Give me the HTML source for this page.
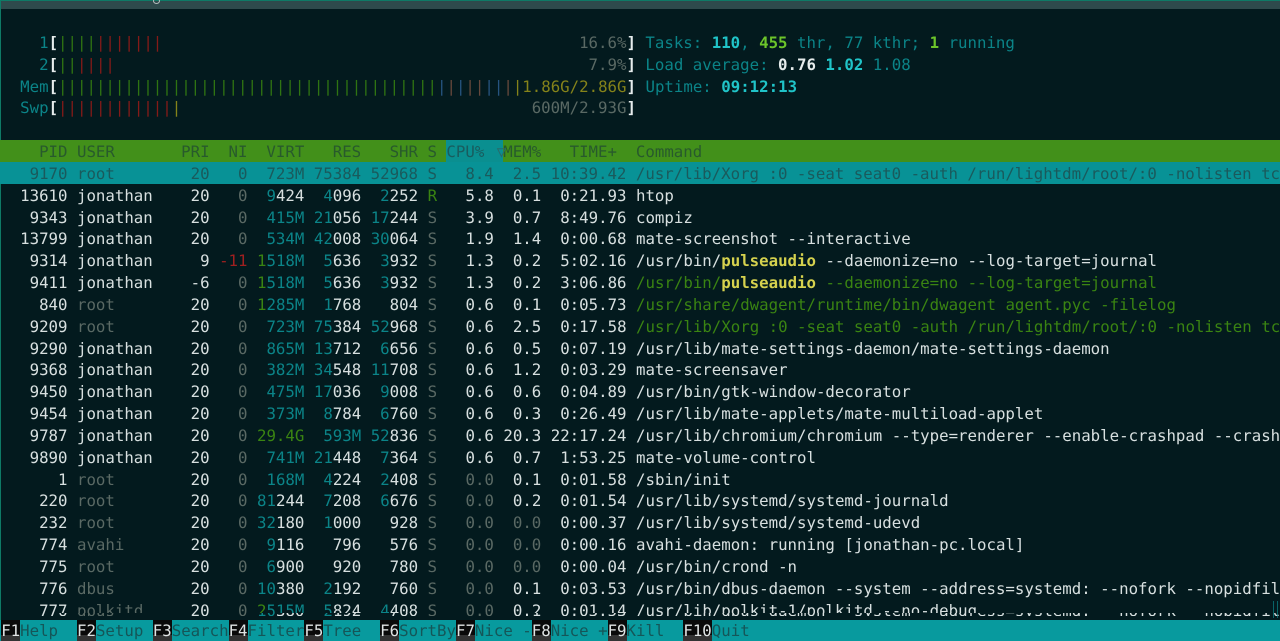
<!DOCTYPE html>
<html><head><meta charset="utf-8"><style>
html,body{margin:0;padding:0;background:#031a1e;width:1280px;height:641px;overflow:hidden}
#t{position:absolute;left:0;top:0;width:1280px;height:641px;overflow:hidden;font:15.74px/23.84px "DejaVu Sans Mono",monospace;color:#d8e0e0;text-rendering:geometricPrecision}
.l{position:absolute;left:1.2px;width:1279px;height:21.84px;white-space:pre;overflow:hidden}
.l.hd,.l.sel,.l.bar{left:0;padding-left:1.2px}
i{font-style:normal;color:#0b8488}
u{text-decoration:none;color:#5a6964}
s{text-decoration:none;color:#3a8412}
em{font-style:normal;color:#a02020}
b{color:#d6d24e;font-weight:bold}
b.w{color:#e6ecec}
b.c{color:#20c4c8}
b.g{color:#6cc52a}
.m s{color:#2f7412}
.m em{color:#851a18}
.y{color:#85831a}
.x{color:#265480}
.o{color:#66483c}
.p{display:inline-block;height:1px}
.sel{background:#089296;color:#1a5a5c}
.sel i,.sel u{color:inherit}
.hd{background:#42901a;color:#285a2c}
.hd span{background:#0a8f90;color:#195c5e;display:inline-block}
.bar{background:#089a9e;color:#155658}
.bar span{color:#e0e4e4;background:linear-gradient(#0a0a0a 0,#0a0a0a 66%,#333 66%,#333 100%);display:inline-block}
</style></head><body><div id="t">
<div style="position:absolute;left:0;top:0;width:1280px;height:9px;background:#2e4a4c;border-top:1px solid #0e7a66;box-sizing:border-box"></div>
<div style="position:absolute;left:153px;top:-2px;width:5px;height:4px;border:1px solid #b4bcbc;border-radius:50%"></div>
<div style="position:absolute;left:0;top:0;width:1px;height:620px;background:#0e7a66"></div>

<div class="l m" style="top:30.84px"><i>    1</i><b class="w">[</b><s>||||</s><em>|||||||</em><span class="p" style="width:44ch"></span><u>16.6%</u><b class="w">]</b> <i>Tasks: </i><b class="c">110</b><i>, </i><b class="g">455</b><i> thr, 77 kthr; </i><b class="g">1</b><i> running</i></div>
<div class="l m" style="top:52.68px"><i>    2</i><b class="w">[</b><s>||</s><em>||||</em><span class="p" style="width:50ch"></span><u>7.9%</u><b class="w">]</b> <i>Load average: </i><b class="w">0.76 </b><b class="c">1.02 </b><i>1.08</i></div>
<div class="l m" style="top:74.52px"><i>  Mem</i><b class="w">[</b><s>||||||||||||||||||||||||||||||||||||||||</s><span class="x">|</span><span class="o">|</span><span class="x">|</span><span class="o">||</span><span class="x">||</span><span class="o">|</span><span class="y">|1.86G/2.86G</span><b class="w">]</b> <i>Uptime: </i><b class="c">09:12:13</b></div>
<div class="l m" style="top:96.36px"><i>  Swp</i><b class="w">[</b><em>||||||||||||</em><span class="y">|</span><span class="p" style="width:37ch"></span><u>600M/2.93G</u><b class="w">]</b></div>

<div class="l hd" style="top:140.04px">    PID USER       PRI  NI  VIRT   RES   SHR S <span>CPU% <i style="position:relative;left:3px;color:#2a6a6a">▽</i></span>MEM%   TIME+  Command</div>
<div class="l sel" style="top:161.88px">   9170 root        20   0  723M 75384 52968 S   8.4  2.5 10:39.42 /usr/lib/Xorg :0 -seat seat0 -auth /run/lightdm/root/:0 -nolisten tcp</div>
<div class="l" style="top:183.72px">  13610 jonathan    20   <u>0</u>  <i>9</i>424  <i>4</i>096  <i>2</i>252 <s>R</s>   5.8  0.1  0:21.93 htop</div>
<div class="l" style="top:205.56px">   9343 jonathan    20   <u>0</u> <i> 415M</i> <i>21</i>056 <i>17</i>244 <u>S</u>   3.9  0.7  8:49.76 compiz</div>
<div class="l" style="top:227.4px">  13799 jonathan    20   <u>0</u> <i> 534M</i> <i>42</i>008 <i>30</i>064 <u>S</u>   1.9  1.4  0:00.68 mate-screenshot --interactive</div>
<div class="l" style="top:249.24px">   9314 jonathan     9 <em>-11</em> <s>1</s><i>518M</i>  <i>5</i>636  <i>3</i>932 <u>S</u>   1.3  0.2  5:02.16 /usr/bin/<b>pulseaudio</b> --daemonize=no --log-target=journal</div>
<div class="l" style="top:271.08px">   9411 jonathan    -6   <u>0</u> <s>1</s><i>518M</i>  <i>5</i>636  <i>3</i>932 <u>S</u>   1.3  0.2  3:06.86 <s>/usr/bin/</s><b>pulseaudio</b><s> --daemonize=no --log-target=journal</s></div>
<div class="l" style="top:292.92px">    840 <u>root</u>        20   <u>0</u> <s>1</s><i>285M</i>  <i>1</i>768   804 <u>S</u>   0.6  0.1  0:05.73 <s>/usr/share/dwagent/runtime/bin/dwagent agent.pyc -filelog</s></div>
<div class="l" style="top:314.76px">   9209 <u>root</u>        20   <u>0</u> <i> 723M</i> <i>75</i>384 <i>52</i>968 <u>S</u>   0.6  2.5  0:17.58 <s>/usr/lib/Xorg :0 -seat seat0 -auth /run/lightdm/root/:0 -nolisten tcp</s></div>
<div class="l" style="top:336.6px">   9290 jonathan    20   <u>0</u> <i> 865M</i> <i>13</i>712  <i>6</i>656 <u>S</u>   0.6  0.5  0:07.19 /usr/lib/mate-settings-daemon/mate-settings-daemon</div>
<div class="l" style="top:358.44px">   9368 jonathan    20   <u>0</u> <i> 382M</i> <i>34</i>548 <i>11</i>708 <u>S</u>   0.6  1.2  0:03.29 mate-screensaver</div>
<div class="l" style="top:380.28px">   9450 jonathan    20   <u>0</u> <i> 475M</i> <i>17</i>036  <i>9</i>008 <u>S</u>   0.6  0.6  0:04.89 /usr/bin/gtk-window-decorator</div>
<div class="l" style="top:402.12px">   9454 jonathan    20   <u>0</u> <i> 373M</i>  <i>8</i>784  <i>6</i>760 <u>S</u>   0.6  0.3  0:26.49 /usr/lib/mate-applets/mate-multiload-applet</div>
<div class="l" style="top:423.96px">   9787 jonathan    20   <u>0</u> <s>29.4G</s> <i> 593M</i> <i>52</i>836 <u>S</u>   0.6 20.3 22:17.24 /usr/lib/chromium/chromium --type=renderer --enable-crashpad --crashpad</div>
<div class="l" style="top:445.8px">   9890 jonathan    20   <u>0</u> <i> 741M</i> <i>21</i>448  <i>7</i>364 <u>S</u>   0.6  0.7  1:53.25 mate-volume-control</div>
<div class="l" style="top:467.64px">      1 <u>root</u>        20   <u>0</u> <i> 168M</i>  <i>4</i>224  <i>2</i>408 <u>S</u>   <u>0.0</u>  0.1  0:01.58 /sbin/init</div>
<div class="l" style="top:489.48px">    220 <u>root</u>        20   <u>0</u> <i>81</i>244  <i>7</i>208  <i>6</i>676 <u>S</u>   <u>0.0</u>  0.2  0:01.54 /usr/lib/systemd/systemd-journald</div>
<div class="l" style="top:511.32px">    232 <u>root</u>        20   <u>0</u> <i>32</i>180  <i>1</i>000   928 <u>S</u>   <u>0.0</u>  <u>0.0</u>  0:00.37 /usr/lib/systemd/systemd-udevd</div>
<div class="l" style="top:533.16px">    774 <u>avahi</u>       20   <u>0</u>  <i>9</i>116   796   576 <u>S</u>   <u>0.0</u>  <u>0.0</u>  0:00.16 avahi-daemon: running [jonathan-pc.local]</div>
<div class="l" style="top:555px">    775 <u>root</u>        20   <u>0</u>  <i>6</i>900   920   780 <u>S</u>   <u>0.0</u>  <u>0.0</u>  0:00.04 /usr/bin/crond -n</div>
<div class="l" style="top:576.84px">    776 <u>dbus</u>        20   <u>0</u> <i>10</i>380  <i>2</i>192   760 <u>S</u>   <u>0.0</u>  0.1  0:03.53 /usr/bin/dbus-daemon --system --address=systemd: --nofork --nopidfile</div>

<div style="position:absolute;left:0;top:598.68px;width:1280px;height:14.3px;overflow:hidden"><div class="l" style="top:0">    777 <u>polkitd</u>     20   <u>0</u> <s>2</s><i>515M</i>  <i>5</i>824  <i>4</i>408 <u>S</u>   <u>0.0</u>  0.2  0:01.14 /usr/lib/polkit-1/polkitd --no-debug</div></div>
<div style="position:absolute;left:0;top:613px;width:1280px;height:3px;overflow:hidden"><div class="l" style="top:-14px">    776 <u>dbus</u>        20   <u>0</u> <i>10</i>380  <i>2</i>192   760 <u>S</u>   <u>0.0</u>  0.1  0:03.53 /usr/bin/dbus-daemon --system --address=systemd: --nofork --nopidfile</div></div>
<div style="position:absolute;left:1273px;top:601px;width:3px;height:17px;border-left:1px solid #0b8488;border-right:1px solid #0b8488;opacity:.7"></div>

<div class="l bar" style="top:620px;height:21px;line-height:22.5px"><span>F1</span>Help  <span>F2</span>Setup <span>F3</span>Search<span>F4</span>Filter<span>F5</span>Tree  <span>F6</span>SortBy<span>F7</span>Nice -<span>F8</span>Nice +<span>F9</span>Kill  <span>F10</span>Quit</div>
</div></body></html>
